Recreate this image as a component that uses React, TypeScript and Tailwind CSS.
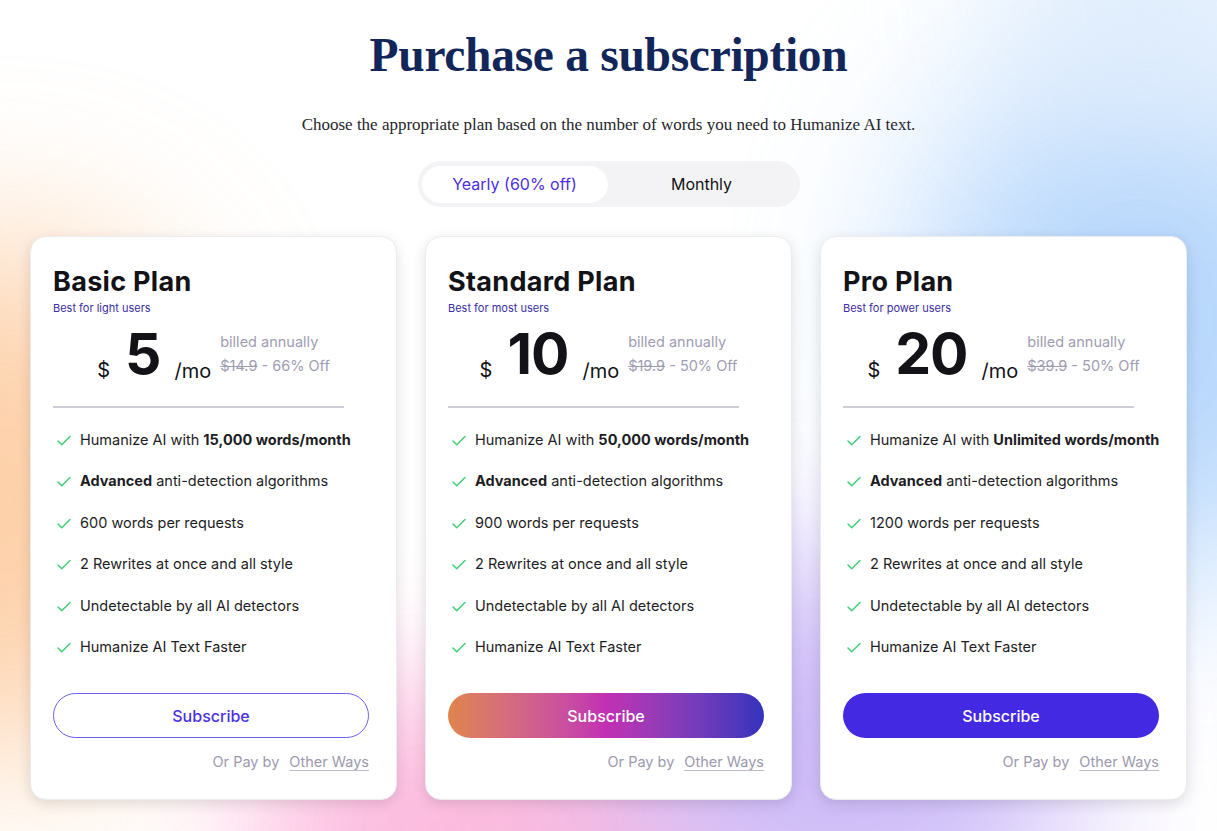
import { Check } from 'lucide-react'

type Plan = {
  name: string
  tagline: string
  price: string
  was: string
  off: string
  words: string
  perRequest: string
  button: 'outline' | 'gradient' | 'solid'
}

const plans: Plan[] = [
  { name: 'Basic Plan', tagline: 'Best for light users', price: '5', was: '$14.9', off: '66% Off', words: '15,000 words/month', perRequest: '600', button: 'outline' },
  { name: 'Standard Plan', tagline: 'Best for most users', price: '10', was: '$19.9', off: '50% Off', words: '50,000 words/month', perRequest: '900', button: 'gradient' },
  { name: 'Pro Plan', tagline: 'Best for power users', price: '20', was: '$39.9', off: '50% Off', words: 'Unlimited words/month', perRequest: '1200', button: 'solid' },
]

const buttonStyles = {
  outline: 'border border-[#6d5ff2] bg-white text-[#4a2fe3]',
  gradient: 'bg-gradient-to-r from-[#e0844a] via-[#c22fb3] to-[#3432bd] text-white',
  solid: 'bg-[#4429e2] text-white',
}

function Feature({ children }: { children: React.ReactNode }) {
  return (
    <li className="flex items-center gap-[7px] h-[41.5px]">
      <Check className="w-[18px] h-[18px] text-[#3fcf78] mt-[2px]" strokeWidth={2} />
      <span>{children}</span>
    </li>
  )
}

function PlanCard({ plan }: { plan: Plan }) {
  return (
    <div className="bg-white rounded-[16px] shadow-[0_4px_14px_rgba(0,0,0,0.12)] border border-[#ececf0] w-[367px] h-[564px] px-[22px] pt-[28px]">
      <h2 className="text-[27px] font-bold leading-[34px] text-[#121217] tracking-[0.3px]">{plan.name}</h2>
      <p className="text-[11px] text-[#3a2ea5] mt-[2px] leading-[14px]">{plan.tagline}</p>

      <div className="flex justify-center items-end mt-[10px]">
        <span className="text-[20px] text-[#121217] leading-none mb-[2px]">$</span>
        <span className="text-[57px] font-bold text-[#121217] leading-none ml-[15px] mr-[14px] tracking-[-1px]">{plan.price}</span>
        <span className="text-[20px] text-[#121217] leading-none mb-[1px]">/mo</span>
        <div className="ml-[9px] text-[14.5px] text-[#a09db2] leading-[24px] self-start mt-[5px]">
          <div>billed annually</div>
          <div>
            <span className="line-through">{plan.was}</span> - {plan.off}
          </div>
        </div>
      </div>

      <div className="w-[291px] h-[2px] bg-[#cfcdd5] mt-[24px]" />

      <ul className="mt-[11px] text-[14.5px] text-[#1d1d24] pl-[2px]">
        <Feature>
          Humanize AI with <b className="font-bold">{plan.words}</b>
        </Feature>
        <Feature>
          <b className="font-bold">Advanced</b> anti-detection algorithms
        </Feature>
        <Feature>{plan.perRequest} words per requests</Feature>
        <Feature>2 Rewrites at once and all style</Feature>
        <Feature>Undetectable by all AI detectors</Feature>
        <Feature>Humanize AI Text Faster</Feature>
      </ul>

      <button className={`mt-[25px] w-[316px] h-[45px] rounded-full text-[16px] font-medium ${buttonStyles[plan.button]}`}>
        Subscribe
      </button>

      <div className="w-[316px] flex justify-end mt-[13px] text-[14.5px] text-[#9c99ae]">
        <span>Or Pay by</span>
        <span className="ml-[10px] underline underline-offset-[3px] decoration-[#bdbbc9]">Other Ways</span>
      </div>
    </div>
  )
}

export default function App() {
  return (
    <div className="relative w-full min-h-[831px] overflow-hidden bg-white font-['Inter',sans-serif]">
      {/* soft background blobs */}
      <div className="absolute inset-0 pointer-events-none">
        <div className="absolute left-[-170px] top-[240px] w-[340px] h-[520px] rounded-full bg-[#fcc08a] opacity-75 blur-[90px]" />
        <div className="absolute left-[250px] top-[690px] w-[480px] h-[280px] rounded-full bg-[#fbaed8] opacity-85 blur-[70px]" />
        <div className="absolute left-[620px] top-[560px] w-[460px] h-[380px] rounded-full bg-[#c3aef6] opacity-85 blur-[80px]" />
        <div className="absolute left-[920px] top-[60px] w-[440px] h-[520px] rounded-full bg-[#a9cffb] opacity-85 blur-[90px]" />
        <div className="absolute left-[1000px] top-[-120px] w-[300px] h-[260px] rounded-full bg-[#dcebfc] opacity-80 blur-[70px]" />
      </div>

      <div className="relative flex flex-col items-center">
        <h1 className="mt-[26px] font-['Liberation_Serif',serif] font-bold text-[47.5px] leading-[58px] text-[#13265a] tracking-[-0.3px]">
          Purchase a subscription
        </h1>
        <p className="mt-[30px] font-['Liberation_Serif',serif] text-[17px] leading-[22px] text-[#26262c]">
          Choose the appropriate plan based on the number of words you need to Humanize AI text.
        </p>

        <div className="mt-[25px] w-[382px] h-[46px] rounded-full bg-[#f3f3f6] flex items-center px-[4px]">
          <div className="w-[186px] h-[37px] rounded-full bg-white flex items-center justify-center text-[16px] text-[#4b2fe0]">
            Yearly (60% off)
          </div>
          <div className="flex-1 flex items-center justify-center text-[16px] text-[#111]">Monthly</div>
        </div>

        <div className="mt-[29px] flex gap-[28px]">
          {plans.map((p) => (
            <PlanCard key={p.name} plan={p} />
          ))}
        </div>
      </div>
    </div>
  )
}
